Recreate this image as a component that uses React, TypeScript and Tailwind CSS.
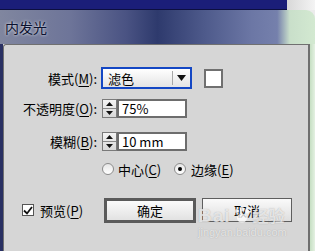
import React from "react";

function Spinner() {
  return (
    <div className="w-[15px] h-full flex flex-col border border-[#7a7a7a] bg-[linear-gradient(#f4f4f4,#d8d8d8)]">
      <div className="flex-1 flex items-center justify-center border-b border-[#8a8a8a]">
        <svg width="7" height="4" viewBox="0 0 7 4">
          <path d="M3.5 0 L7 4 L0 4 Z" fill="#111" />
        </svg>
      </div>
      <div className="flex-1 flex items-center justify-center">
        <svg width="7" height="4" viewBox="0 0 7 4">
          <path d="M0 0 L7 0 L3.5 4 Z" fill="#111" />
        </svg>
      </div>
    </div>
  );
}

function NumField({ value }: { value: string }) {
  return (
    <div className="flex h-[19px] ml-[4px]">
      <Spinner />
      <div className="w-[70px] h-full bg-white border-2 border-[#6d6d6d] flex items-center pl-[3px] text-[13px] leading-none">
        {value}
      </div>
    </div>
  );
}

function Radio({ checked }: { checked?: boolean }) {
  return (
    <span className="w-[12px] h-[12px] rounded-full border border-[#8c8c8c] bg-[linear-gradient(#e6e6e6,#ffffff)] flex items-center justify-center">
      {checked && <span className="w-[4px] h-[4px] rounded-full bg-black" />}
    </span>
  );
}

export default function App() {
  return (
    <div className="w-[315px] h-[251px] overflow-hidden relative bg-[#ececec] font-['Noto_Sans_CJK_SC',sans-serif] text-black">
      <div className="flex h-[10px]">
        <div className="flex-1 bg-[#1b1e79] border-b border-[#0d0f40]" />
        <div className="w-[28px] bg-[linear-gradient(90deg,#d8d8d8,#f4f4f4)]" />
      </div>

      <div className="h-[34px] rounded-tr-[9px] flex items-center pl-[5px] bg-[linear-gradient(90deg,#80869f_0%,#6e7599_22%,#4a5383_40%,#2e3a6d_50%,#4e5a8b_65%,#6c77a5_80%,#7580ac_88%,#c9dfca_92%,#d3e9d1_100%)]">
        <span className="text-[14px] leading-none text-[#0c1230] [text-shadow:0_0_3px_rgba(255,255,255,0.95)]">内发光</span>
      </div>

      <div className="flex h-[207px]">
        <div className="w-[3px] bg-[#2a3163]" />
        <div className="flex-1 bg-[#d6d6d6] border-t border-l border-[#707070] rounded-tl-[3px] text-[13px] leading-none">
          <div className="flex items-center mt-[22px] h-[22px]">
            <div className="w-[94px] text-right pr-[1px]">
              模式(<span className="underline underline-offset-2">M</span>):
            </div>
            <div className="ml-[3px] w-[91px] h-[22px] border-2 border-[#1447c4] bg-[linear-gradient(#ffffff,#e4e4e4)] flex items-center">
              <span className="pl-[5px] flex-1 text-[13px]">滤色</span>
              <span className="w-px h-[14px] bg-[#a8a8a8]" />
              <span className="w-[17px] flex items-center justify-center">
                <svg width="9" height="6" viewBox="0 0 9 6">
                  <path d="M0 0 L9 0 L4.5 6 Z" fill="#111" />
                </svg>
              </span>
            </div>
            <div className="ml-[12px] w-[19px] h-[19px] border-2 border-[#707070] bg-white" />
          </div>

          <div className="flex items-center mt-[10px] h-[19px]">
            <div className="w-[94px] text-right pr-[1px]">
              不透明度(<span className="underline underline-offset-2">O</span>):
            </div>
            <NumField value="75%" />
          </div>

          <div className="flex items-center mt-[14px] h-[19px]">
            <div className="w-[94px] text-right pr-[1px]">
              模糊(<span className="underline underline-offset-2">B</span>):
            </div>
            <NumField value="10 mm" />
          </div>

          <div className="flex items-center mt-[12px] h-[12px] pl-[98px]">
            <Radio />
            <span className="ml-[4px]">
              中心(<span className="underline underline-offset-2">C</span>)
            </span>
            <span className="ml-[13px]">
              <Radio checked />
            </span>
            <span className="ml-[5px]">
              边缘(<span className="underline underline-offset-2">E</span>)
            </span>
          </div>

          <div className="flex items-center mt-[22px] h-[26px]">
            <div className="ml-[18px] w-[12px] h-[12px] border border-[#555] bg-white flex items-center justify-center">
              <svg width="10" height="9" viewBox="0 0 10 9">
                <path d="M1 4.5 L4 7.5 L9 1" stroke="#111" strokeWidth="1.8" fill="none" />
              </svg>
            </div>
            <span className="ml-[6px]">
              预览(<span className="underline underline-offset-2">P</span>)
            </span>
            <div className="ml-[21px] w-[92px] h-[25px] border-[3px] border-[#5a5a5a] bg-[linear-gradient(#fbfbfb,#e2e2e2)] flex items-center justify-center">
              确定
            </div>
            <div className="ml-[6px] w-[90px] h-[24px] border border-[#5e5e5e] bg-[linear-gradient(#fafafa,#dedede)] flex items-center justify-center">
              取消
            </div>
          </div>
        </div>
        <div className="w-[2px] bg-[#6f6f6f]" />
        <div className="w-[5px] bg-[linear-gradient(90deg,#c6dfc3,#e4f1e2)]" />
      </div>

      <div className="absolute left-[198px] top-[205px] flex flex-col items-start pointer-events-none text-white/70 [text-shadow:0_0_1px_rgba(120,120,120,0.6)]">
        <div className="flex items-center h-[20px]">
          <span className="text-[19px] font-bold font-['Liberation_Sans',sans-serif] leading-none tracking-[1px]">Bai</span>
          <svg width="20" height="18" viewBox="0 0 20 18" className="mx-[1px]">
            <g fill="rgba(255,255,255,0.75)">
              <ellipse cx="5" cy="5" rx="2" ry="2.6" />
              <ellipse cx="10" cy="3" rx="2" ry="2.6" />
              <ellipse cx="15" cy="5" rx="2" ry="2.6" />
              <ellipse cx="10" cy="12" rx="5" ry="4.5" />
            </g>
          </svg>
          <span className="text-[16px] font-bold leading-none">经验</span>
        </div>
        <span className="text-[11px] leading-none mt-[2px] font-['Liberation_Sans',sans-serif]">jingyan.baidu.com</span>
      </div>
    </div>
  );
}
